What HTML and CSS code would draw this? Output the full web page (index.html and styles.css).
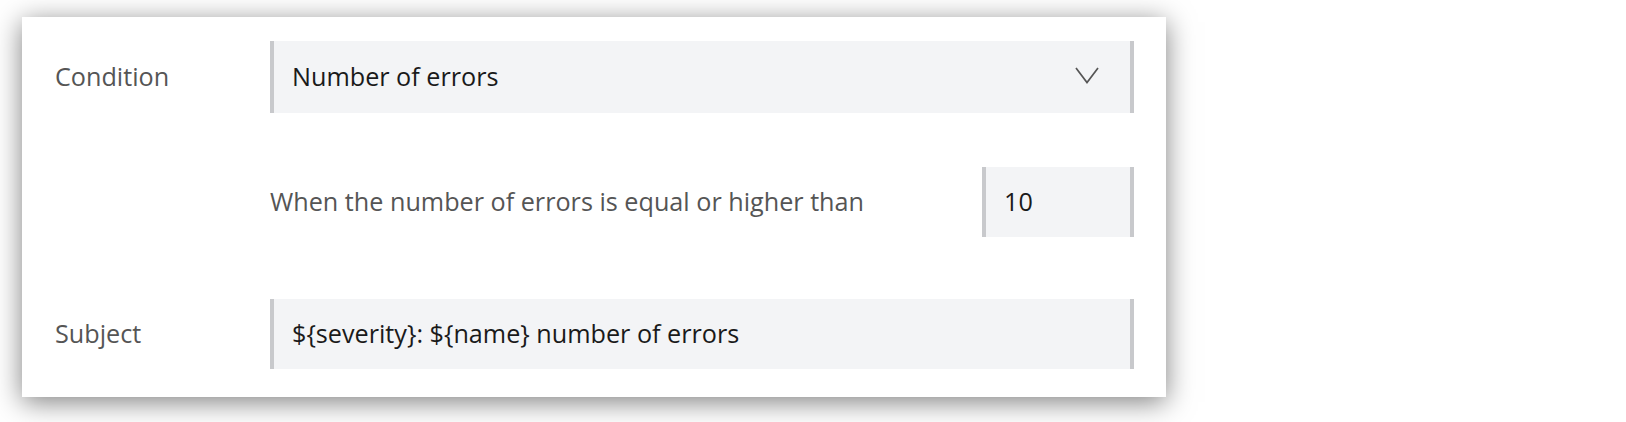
FILE: index.html
```html
<!DOCTYPE html>
<html lang="en">
<head>
<meta charset="utf-8">
<title>Alert condition</title>
<link rel="stylesheet" href="styles.css">
</head>
<body>
<div class="card">
  <div class="row">
    <div class="label">Condition</div>
    <div class="field select">
      <span class="value">Number of errors</span>
      <svg class="chevron" width="24" height="17" viewBox="0 0 24 17" aria-hidden="true">
        <path d="M1 1 L12 15.5 L23 1" fill="none" stroke="#555" stroke-width="1.7"/>
      </svg>
    </div>
  </div>
  <div class="row row-threshold">
    <div class="label"></div>
    <div class="threshold">
      <span class="desc">When the number of errors is equal or higher than</span>
      <div class="field number"><span class="value">10</span></div>
    </div>
  </div>
  <div class="row row-subject">
    <div class="label">Subject</div>
    <div class="field text"><span class="value">${severity}: ${name} number of errors</span></div>
  </div>
</div>
</body>
</html>
```

FILE: styles.css
```css
html, body {
  margin: 0;
  padding: 0;
  background: #ffffff;
}

body {
  font-family: "Open Sans", "Noto Sans", sans-serif;
  padding: 17px 0 0 22px;
  min-height: 422px;
  box-sizing: border-box;
}

.card {
  width: 1144px;
  box-sizing: border-box;
  background: #ffffff;
  padding: 24px 32px 28px 33px;
  box-shadow: 0 5px 26px rgba(0, 0, 0, 0.5);
}

.row {
  display: grid;
  grid-template-columns: 215px 1fr;
  align-items: center;
}

.row-threshold {
  margin-top: 54px;
}

.row-subject {
  margin-top: 62px;
}

.label {
  font-size: 25.2px;
  color: #555555;
  padding-bottom: 3px;
}

.field {
  box-sizing: border-box;
  background: #f3f4f6;
  border-left: 4px solid #c8c9cc;
  border-right: 4px solid #c8c9cc;
  display: flex;
  align-items: center;
  padding: 0 18px 2px;
  font-size: 25.2px;
  color: #1a1a1a;
}

.select {
  height: 72px;
  justify-content: space-between;
  padding-right: 31px;
  padding-bottom: 3px;
}

.chevron {
  display: block;
}

.threshold {
  display: flex;
  align-items: center;
  justify-content: space-between;
}

.desc {
  font-size: 25.2px;
  color: #555555;
  padding-bottom: 2px;
}

.number {
  width: 152px;
  height: 70px;
}

.text {
  height: 70px;
}
```
